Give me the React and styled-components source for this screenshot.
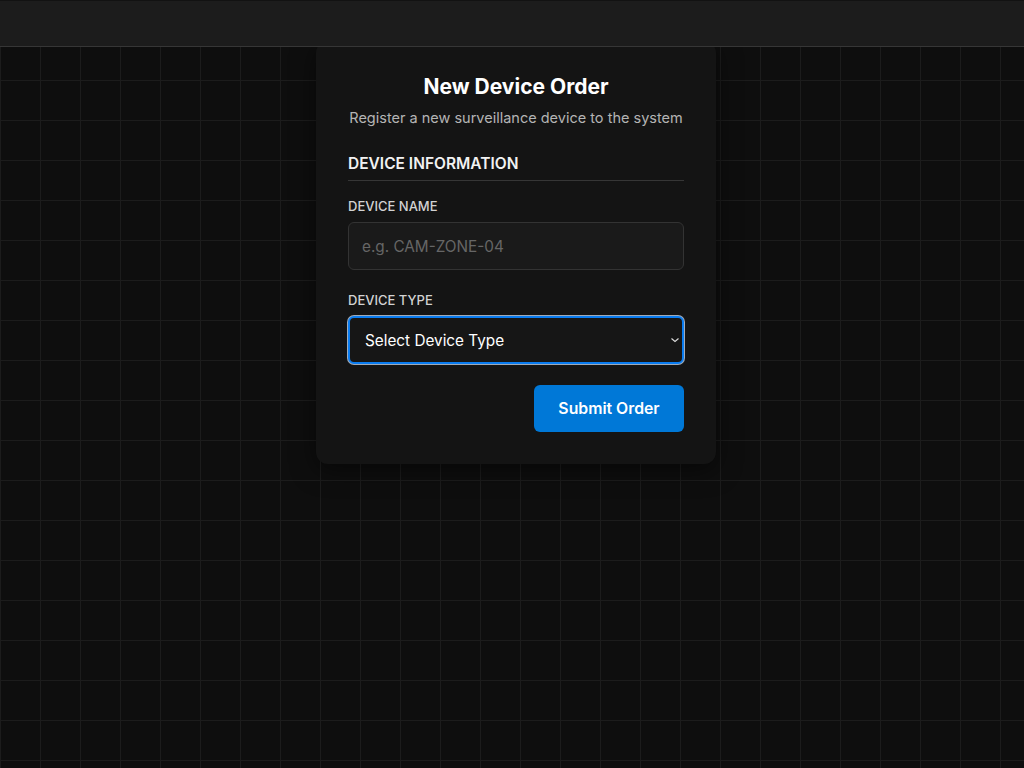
import React from "react";
import styled, { createGlobalStyle } from "styled-components";

const GlobalStyle = createGlobalStyle`
  html, body {
    margin: 0;
    padding: 0;
    background-color: #0e0e0e;
    font-family: Inter, "Noto Sans", "Liberation Sans", sans-serif;
    color: #fff;
  }
  * { box-sizing: border-box; }
`;

const Page = styled.div`
  min-height: 768px;
  background-color: #0e0e0e;
  background-image:
    linear-gradient(to right, #1c1c1c 1px, transparent 1px),
    linear-gradient(to bottom, #1c1c1c 1px, transparent 1px);
  background-size: 40px 40px;
  padding: 41px 0 0 8px;
  display: flex;
  justify-content: center;
  align-items: flex-start;
`;

const TopBar = styled.header`
  position: fixed;
  top: 0;
  left: 0;
  right: 0;
  height: 47px;
  background: #1c1c1c;
  border-top: 1px solid #121212;
  border-bottom: 1px solid #363636;
  z-index: 10;
`;

const Card = styled.form`
  width: 400px;
  background: #141414;
  border-radius: 12px;
  padding: 32px;
  box-shadow: 0 6px 24px rgba(0, 0, 0, 0.5);
  display: flex;
  flex-direction: column;
`;

const Title = styled.h1`
  margin: 0;
  font-size: 21px;
  line-height: 28px;
  font-weight: 700;
  text-align: center;
  color: #fff;
`;

const Subtitle = styled.p`
  margin: 7px 0 0;
  font-size: 14.5px;
  line-height: 20px;
  text-align: center;
  color: #b4b4b4;
`;

const SectionHeading = styled.h2`
  margin: 25px 0 0;
  padding-bottom: 5px;
  font-size: 15.5px;
  line-height: 22px;
  font-weight: 600;
  text-transform: uppercase;
  color: #f2f2f2;
  border-bottom: 1px solid #363636;
`;

const Field = styled.div`
  display: flex;
  flex-direction: column;
  gap: 8px;
  margin-top: ${p => p.$top || 20}px;
`;

const Label = styled.label`
  font-size: 13px;
  line-height: 16px;
  font-weight: 500;
  text-transform: uppercase;
  color: #d2d2d2;
`;

const TextInput = styled.input`
  height: 48px;
  padding: 0 13px;
  background: #1a1a1a;
  border: 1px solid #333;
  border-radius: 6px;
  color: #fff;
  font-family: inherit;
  font-size: 15.3px;
  outline: none;

  &::placeholder { color: #666; }
`;

const SelectWrap = styled.div`
  position: relative;
  height: 48px;
  border: 2px solid #0a7cf0;
  border-radius: 6px;
  box-shadow: 0 0 0 1px rgba(220, 235, 255, 0.7);
  background: #161616;
  display: flex;
  align-items: center;
`;

const Select = styled.select`
  appearance: none;
  width: 100%;
  height: 100%;
  padding: 0 30px 0 15px;
  background: transparent;
  border: none;
  color: #fff;
  font-family: inherit;
  font-size: 15.3px;
  outline: none;
`;

const Chevron = styled.svg`
  position: absolute;
  right: 2px;
  top: 50%;
  transform: translateY(-50%);
  pointer-events: none;
`;

const Actions = styled.div`
  display: flex;
  justify-content: flex-end;
  margin-top: 21px;
`;

const SubmitButton = styled.button`
  width: 150px;
  height: 47px;
  background: #0078d7;
  border: none;
  border-radius: 6px;
  color: #fff;
  font-family: inherit;
  font-size: 15.8px;
  font-weight: 600;
  cursor: pointer;
`;

export default function App() {
  return (
    <>
      <GlobalStyle />
      <TopBar />
      <Page>
        <Card onSubmit={e => e.preventDefault()}>
          <Title>New Device Order</Title>
          <Subtitle>Register a new surveillance device to the system</Subtitle>
          <SectionHeading>Device Information</SectionHeading>
          <Field $top={17}>
            <Label htmlFor="device-name">Device Name</Label>
            <TextInput id="device-name" placeholder="e.g. CAM-ZONE-04" />
          </Field>
          <Field $top={22}>
            <Label htmlFor="device-type">Device Type</Label>
            <SelectWrap>
              <Select id="device-type" defaultValue="">
                <option value="">Select Device Type</option>
                <option value="camera">Camera</option>
                <option value="sensor">Motion Sensor</option>
              </Select>
              <Chevron width="10" height="10" viewBox="0 0 10 10">
                <path d="M1.5 3.5 L5 6.5 L8.5 3.5" fill="none" stroke="#ddd" strokeWidth="1.1" />
              </Chevron>
            </SelectWrap>
          </Field>
          <Actions>
            <SubmitButton type="submit">Submit Order</SubmitButton>
          </Actions>
        </Card>
      </Page>
    </>
  );
}
